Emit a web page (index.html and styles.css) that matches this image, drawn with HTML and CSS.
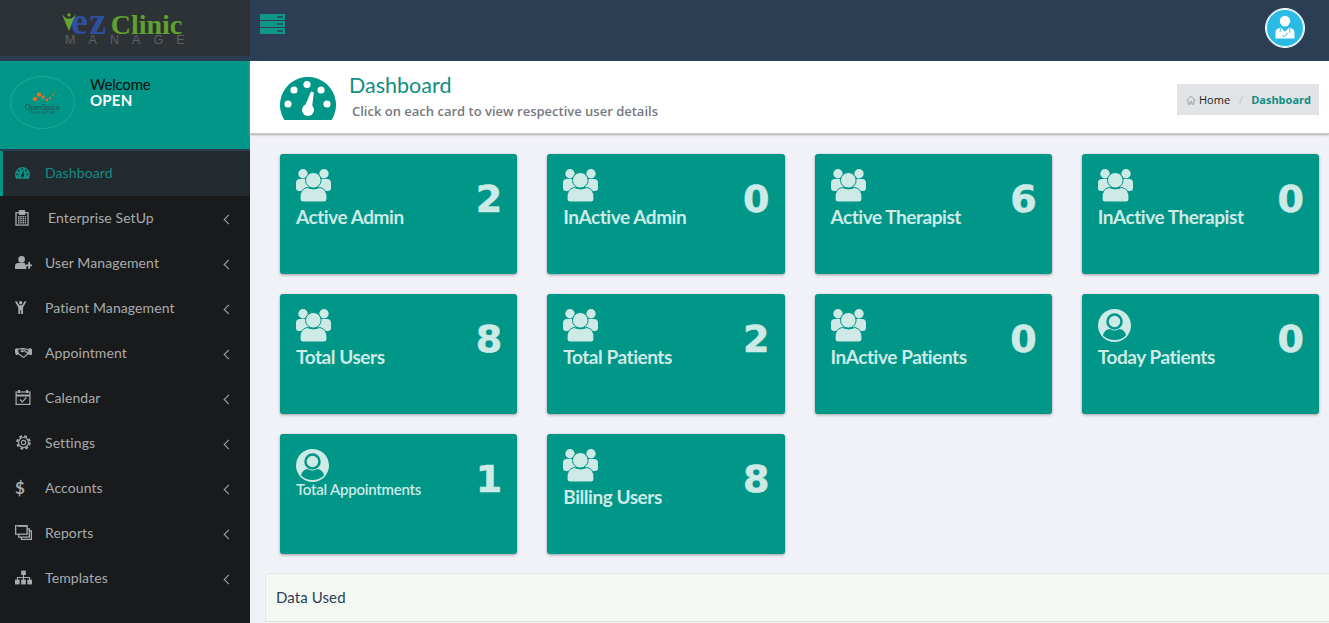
FILE: index.html
```html
<!DOCTYPE html>
<html lang="en">
<head>
    <meta charset="UTF-8">
    <meta name="viewport" content="width=device-width, initial-scale=1.0">
    <title>EZ Clinic Manage - Dashboard</title>
    <link rel="stylesheet" href="styles.css">
</head>
<body>
    <svg class="defs" width="0" height="0">
        <symbol id="i-gauge" viewBox="0 0 56 44">
            <path d="M4.4 43A28 28 0 1 1 51.6 43Z" fill="currentColor"/>
            <g style="fill: var(--dot, #fff)">
                <circle cx="27" cy="7.5" r="3.6"/><circle cx="14" cy="13" r="3.6"/><circle cx="41" cy="13" r="3.6"/>
                <circle cx="8" cy="27" r="3.6"/><circle cx="47" cy="27" r="3.6"/><circle cx="28" cy="33" r="6"/>
                <path d="M24.5 30L31 14.500L33.800 15.200L32 31Z"/>
            </g>
        </symbol>
        <symbol id="i-users" viewBox="0 0 35 33">
            <g fill="currentColor">
                <circle cx="7" cy="4.700" r="4.700"/><circle cx="28" cy="4.700" r="4.700"/>
                <path d="M0 14Q0 10 4 10H10Q13 10 13 14V22H3Q0 22 0 19Z"/>
                <path d="M35 14Q35 10 31 10H25Q22 10 22 14V22H32Q35 22 35 19Z"/>
                <circle cx="17.300" cy="11.300" r="7.800" stroke="#009688" stroke-width="1"/>
                <path d="M4 30Q3.500 20 11 18.500Q17.500 21.500 24 18.500Q31.500 20 31 30Q31 33 28 33H7Q4 33 4 30Z" stroke="#009688" stroke-width="1"/>
            </g>
        </symbol>
        <symbol id="i-usercircle" viewBox="0 0 33 33">
            <circle cx="16.500" cy="16.500" r="16.500" fill="currentColor"/>
            <circle cx="16.500" cy="12.500" r="7" fill="currentColor" stroke="#009688" stroke-width="2.500"/>
            <path d="M5 26.500Q6.500 20 12 20Q16.500 23 21 20Q26.500 20 28 26.500Q23 31 16.500 31Q10 31 5 26.500Z" fill="#009688"/>
        </symbol>
    </svg>

    <div class="layout">
        <aside class="sidebar">
            <div class="logo-box">
                <div class="logo">
                    <div class="logo-top">
                        <svg class="logo-man" viewBox="0 0 18 24"><circle cx="9" cy="3.500" r="2.200" fill="#63a52f"/><path d="M0 2Q5 9 7 8H11Q14 8 18 2Q15 11 13 14Q11 21 9 24Q5 16 4 12Q2 8 0 2Z" fill="#63a52f"/></svg>
                        <span class="logo-ez">ez</span>
                        <span class="logo-clinic">Clinic</span>
                    </div>
                    <div class="logo-sub">MANAGE</div>
                </div>
            </div>
            <div class="user-panel">
                <div class="user-logo">
                    <svg class="user-mark" viewBox="0 0 30 13">
                        <g fill="#e2702a"><circle cx="11" cy="3.500" r="2.300"/><circle cx="7" cy="8" r="2.300"/><circle cx="15" cy="6" r="1.700"/><circle cx="19" cy="9" r="1.400"/><circle cx="22" cy="7" r="1.100"/><circle cx="25" cy="4" r=".9"/><circle cx="27" cy="1" r=".7"/></g>
                    </svg>
                    <span class="user-logo-name">OpenSpace</span>
                    <span class="user-logo-tag">INNOVATOR</span>
                </div>
                <div class="user-text">
                    <div class="user-welcome">Welcome</div>
                    <div class="user-name">OPEN</div>
                </div>
            </div>
            <nav class="menu">
                <a class="menu-item active">
                    <svg class="menu-icon gauge-small"><use href="#i-gauge"/></svg>
                    <span>Dashboard</span>
                </a>
                <a class="menu-item">
                    <svg class="menu-icon icon-tall" viewBox="1 .5 14 15.500" fill="none" stroke="currentColor" stroke-width="1.300"><rect x="2" y="3" width="12" height="12.300"/><rect x="5.500" y="1" width="5" height="3.500" fill="currentColor"/><path d="M4 7h8M4 9h8M4 11h8M4 13h8" stroke-dasharray="1.500 .8"/></svg>
                    <span>Enterprise SetUp</span>
                    <span class="chev"></span>
                </a>
                <a class="menu-item">
                    <svg class="menu-icon" viewBox="0 0 18 14" fill="currentColor"><circle cx="7" cy="3.700" r="3.500"/><path d="M0 14V11Q0 7.500 3.500 7.500H10.500L10.500 9.500H12V14Z"/><path d="M14 6.500h2v2.500h2.400v2h-2.400v2.500h-2V11h-2.500V9H14Z"/></svg>
                    <span>User Management</span>
                    <span class="chev"></span>
                </a>
                <a class="menu-item">
                    <svg class="menu-icon" viewBox="0 0 18 14" fill="currentColor"><circle cx="6" cy="2" r="1.800"/><path d="M0 1L1.500 0L4.500 4.500H7.500L10.500 0L12 1L8.500 7V14H6.500V10H5.500V14H3.500V7Z"/></svg>
                    <span>Patient Management</span>
                    <span class="chev"></span>
                </a>
                <a class="menu-item">
                    <svg class="menu-icon" viewBox="0 0 20 12" fill="none" stroke="currentColor" stroke-width="1.300"><path d="M0 2.500L2.500 1.500L4 7.500L1.500 8.500Z" fill="currentColor"/><path d="M20 2.500L17 1.500L15.800 7.500L19 8.500Z" fill="currentColor"/><path d="M3 2.500L7 1.500H10L15.500 2.500L15.500 7.500L10.500 11.500Q9.500 11.500 9 11L4 7.500"/><path d="M10 1.500L7 4.500Q8.500 6 11 3.500L15.500 7.500"/></svg>
                    <span>Appointment</span>
                    <span class="chev"></span>
                </a>
                <a class="menu-item">
                    <svg class="menu-icon" viewBox="0 0 16 15" fill="none" stroke="currentColor" stroke-width="1.200"><rect x=".6" y="2" width="13.800" height="12.400"/><path d="M.6 5.500H14.400" stroke-width="2"/><path d="M3.500 0V3M11.500 0V3" stroke-width="2"/><path d="M4.500 9.500L6.800 11.800L10.800 7.500"/></svg>
                    <span>Calendar</span>
                    <span class="chev"></span>
                </a>
                <a class="menu-item">
                    <svg class="menu-icon" viewBox="0 0 16 16" fill="none" stroke="currentColor"><circle cx="8" cy="8" r="5.300" stroke-width="1.200"/><circle cx="8" cy="8" r="2.300" stroke-width="1.200"/><circle cx="8" cy="8" r="6.800" stroke-width="2" stroke-dasharray="3 2.340"/></svg>
                    <span>Settings</span>
                    <span class="chev"></span>
                </a>
                <a class="menu-item">
                    <span class="menu-icon dollar">$</span>
                    <span>Accounts</span>
                    <span class="chev"></span>
                </a>
                <a class="menu-item">
                    <svg class="menu-icon" viewBox="0 0 16 14" fill="none" stroke="currentColor" stroke-width="1.200"><rect x=".6" y=".6" width="10.800" height="8"/><path d="M3 .6H11.400" stroke-width="2"/><path d="M3.500 8.600V11.400H13.500V3.500H11.400"/><path d="M6 11.400V13.400H15.400V5.500H13.500"/></svg>
                    <span>Reports</span>
                    <span class="chev"></span>
                </a>
                <a class="menu-item">
                    <svg class="menu-icon" viewBox="0 0 16 13" fill="currentColor"><rect x="5.800" y="0" width="4.400" height="4.200"/><rect x="0" y="8.500" width="4.400" height="4.500"/><rect x="5.800" y="8.500" width="4.400" height="4.500"/><rect x="11.600" y="8.500" width="4.400" height="4.500"/><path d="M7.500 4h1v2h5.700v3h-1V7H8.500v2h-1V7H2.800v2h-1V6h5.700Z"/></svg>
                    <span>Templates</span>
                    <span class="chev"></span>
                </a>
            </nav>
        </aside>

        <div class="page">
            <header class="topbar">
                <div class="toggle"><span></span><span></span><span></span></div>
                <div class="avatar">
                    <svg viewBox="0 0 40 40" width="40" height="40">
                        <circle cx="20" cy="12.500" r="5.500" fill="#fff"/>
                        <path d="M16.500 13h7v4q-3.500 3-7 0Z" fill="#fff"/>
                        <path d="M10 31V25Q10 20.500 15.500 19.500L20 24L24.500 19.500Q30 20.500 30 25V31Z" fill="#fff"/>
                        <path d="M15 20V24M25 20V25M17.500 28Q20 31 22.500 25" fill="none" stroke="#29bbe4" stroke-width="1"/>
                    </svg>
                </div>
            </header>

            <section class="title-bar">
                <svg class="title-icon"><use href="#i-gauge"/></svg>
                <div class="title-text">
                    <h1>Dashboard</h1>
                    <p>Click on each card to view respective user details</p>
                </div>
                <div class="crumbs">
                    <svg class="home" viewBox="0 0 12 12" fill="none" stroke="#999" stroke-width="1"><path d="M.5 6.500L6 1.500L11.500 6.500M2.500 5.500V11H5V8H7V11H9.500V5.500"/></svg>
                    <span class="crumb-home">Home</span>
                    <span class="crumb-sep">/</span>
                    <span class="crumb-current">Dashboard</span>
                </div>
            </section>

            <main class="content">
                <div class="cards">
                    <div class="card"><div class="card-main"><svg class="card-icon"><use href="#i-users"/></svg><div class="card-label">Active Admin</div></div><div class="card-num">2</div></div>
                    <div class="card"><div class="card-main"><svg class="card-icon"><use href="#i-users"/></svg><div class="card-label">InActive Admin</div></div><div class="card-num">0</div></div>
                    <div class="card"><div class="card-main"><svg class="card-icon"><use href="#i-users"/></svg><div class="card-label">Active Therapist</div></div><div class="card-num">6</div></div>
                    <div class="card"><div class="card-main"><svg class="card-icon"><use href="#i-users"/></svg><div class="card-label">InActive Therapist</div></div><div class="card-num">0</div></div>
                    <div class="card"><div class="card-main"><svg class="card-icon"><use href="#i-users"/></svg><div class="card-label">Total Users</div></div><div class="card-num">8</div></div>
                    <div class="card"><div class="card-main"><svg class="card-icon"><use href="#i-users"/></svg><div class="card-label">Total Patients</div></div><div class="card-num">2</div></div>
                    <div class="card"><div class="card-main"><svg class="card-icon"><use href="#i-users"/></svg><div class="card-label">InActive Patients</div></div><div class="card-num">0</div></div>
                    <div class="card"><div class="card-main"><svg class="card-icon round"><use href="#i-usercircle"/></svg><div class="card-label">Today Patients</div></div><div class="card-num">0</div></div>
                    <div class="card"><div class="card-main"><svg class="card-icon round"><use href="#i-usercircle"/></svg><div class="card-label small">Total Appointments</div></div><div class="card-num">1</div></div>
                    <div class="card"><div class="card-main"><svg class="card-icon"><use href="#i-users"/></svg><div class="card-label">Billing Users</div></div><div class="card-num">8</div></div>
                </div>
                <div class="data-card">
                    <div class="data-head">Data Used</div>
                </div>
            </main>
        </div>
    </div>
</body>
</html>
```

FILE: styles.css
```css
html, body { height: 100%; margin: 0; overflow: hidden; }
body { font-family: Lato, sans-serif; background: #f1f2f7; }
.defs { position: absolute; }
.layout { display: flex; height: 100%; }

/* sidebar */
.sidebar { width: 250px; flex: none; background: #181a1b; display: flex; flex-direction: column; }
.logo-box { height: 61px; box-sizing: border-box; background: #2d3236; border-bottom: 5px solid #2b3e53; padding: 9px 0 0 62px; }
.logo-top { display: flex; align-items: baseline; height: 25px; font-family: "Liberation Serif", serif; font-weight: bold; line-height: 24px; }
.logo-man { width: 14px; height: 19px; align-self: flex-start; margin-top: 3px; }
.logo-ez { color: #2f50a0; font-size: 38px; margin-left: -5px; letter-spacing: 1.500px; }
.logo-clinic { color: #5fa22e; font-size: 28px; margin-left: 3px; }
.logo-sub { color: #5d6165; font-family: "Liberation Sans", sans-serif; font-size: 12.500px; letter-spacing: 13.100px; margin-left: 3px; line-height: 12px; white-space: nowrap; }

.user-panel { height: 90px; box-sizing: border-box; background: #009688; border-bottom: 2px solid #2b3e53; display: flex; }
.user-logo { width: 63px; height: 51px; margin: 15px 0 0 10px; border: 1.500px solid #1fa597; border-radius: 50%; display: flex; flex-direction: column; align-items: center; justify-content: center; color: #2f4a50; }
.user-mark { width: 30px; height: 13px; }
.user-logo-name { font-size: 7px; line-height: 7px; }
.user-logo-tag { font-size: 3px; line-height: 4px; letter-spacing: 1px; }
.user-text { margin: 15px 0 0 15px; font-size: 15px; line-height: 16px; }
.user-welcome { color: #0b0f10; letter-spacing: -.2px; }
.user-name { color: #fff; font-weight: bold; letter-spacing: .2px; }

.menu-item { height: 45px; display: flex; align-items: center; color: #a9acae; font-size: 14px; letter-spacing: .1px; padding: 0 0 2px 15px; box-sizing: border-box; }
.menu-item.active { background: #22292f; border-left: 3px solid #009688; padding-left: 12px; color: #0f8e83; --dot: #22292f; }
.menu-icon { width: 17px; height: 15px; flex: none; margin-right: 13px; }
.gauge-small { width: 15px; height: 12px; margin-right: 15px; }
.icon-tall { width: 14px; height: 16px; margin-right: 19px; }
.dollar { font-size: 17px; font-weight: bold; line-height: 15px; }
.chev { width: 6px; height: 6px; margin: 4px 18px 0 auto; border-left: 1.500px solid #a9acae; border-bottom: 1.500px solid #a9acae; transform: rotate(45deg); }

/* top */
.page { flex: 1; min-width: 0; display: flex; flex-direction: column; }
.topbar { height: 61px; flex: none; background: #2b3e53; display: flex; justify-content: space-between; padding: 8px 24px 0 10px; box-sizing: border-box; }
.toggle { width: 25px; display: flex; flex-direction: column; gap: 1px; padding-top: 6px; }
.toggle span { height: 6px; background: #0f9688; position: relative; }
.toggle span::after { content: ""; position: absolute; right: 2px; top: 2px; width: 6px; height: 2px; background: #2b3e53; opacity: .7; }
.avatar { width: 40px; height: 40px; border-radius: 50%; background: #29bbe4; box-shadow: 0 0 0 1px #fff inset; border: 1px solid #fff; box-sizing: border-box; display: flex; align-items: center; justify-content: center; }

.title-bar { height: 73px; flex: none; background: #fff; box-shadow: 0 1px 2px #aaa; border-bottom: 1px solid #c4c6c9; box-sizing: border-box; display: flex; padding: 16px 10px 0 30px; position: relative; }
.title-icon { width: 56px; height: 44px; color: #009688; margin-right: 12px; }
.title-text h1 { margin: -2px 0 0 1px; font-weight: normal; font-size: 21.500px; line-height: 20px; color: #0f8e83; }
.title-text p { margin: 8px 0 0 4px; font-family: "Open Sans", sans-serif; font-size: 13px; font-weight: 600; line-height: 16px; color: #77777f; }
.crumbs { margin-left: auto; margin-top: 7px; width: 142px; height: 31px; background: #e1e3e6; box-sizing: border-box; padding-left: 9px; display: flex; align-items: center; font-family: "Open Sans", sans-serif; font-size: 11px; }
.home { width: 10px; height: 10px; margin-right: 3px; }
.crumb-home { color: #222; }
.crumb-sep { color: #c4c6c9; margin: 0 8px 0 9px; }
.crumb-current { color: #0f8e83; font-weight: bold; }

/* cards */
.content { padding: 20px 0 0 15px; }
.cards { display: grid; grid-template-columns: repeat(4, 1fr); gap: 20px 30px; margin: 0 10px 0 15px; }
.card { height: 120px; background: #009688; border-radius: 3px; box-shadow: 0 1px 3px rgba(0,0,0,.35); color: #cdeae7; display: flex; justify-content: space-between; padding: 15px 15px 0 16px; box-sizing: border-box; }
.card-icon { width: 35px; height: 33px; display: block; }
.card-icon.round { width: 33px; }
.card-label { font-size: 19px; font-weight: bold; line-height: 24px; margin-top: 3px; letter-spacing: -.45px; }
.card-label.small { font-size: 15px; font-weight: 600; line-height: 18px; margin-top: -2px; letter-spacing: -.25px; }
.card-num { font-family: "DejaVu Sans", sans-serif; font-size: 38px; font-weight: bold; line-height: 60px; -webkit-text-stroke: .6px #cdeae7; }

.data-card { margin-top: 19px; background: #f4f8f3; border: 1px solid #e6e8e6; border-right: 0; border-radius: 4px 0 0 0; height: 60px; }
.data-head { height: 47px; line-height: 46px; padding-left: 10px; border-bottom: 1px solid #dcdedc; color: #2b3e53; font-size: 15px; letter-spacing: .1px; }
```
